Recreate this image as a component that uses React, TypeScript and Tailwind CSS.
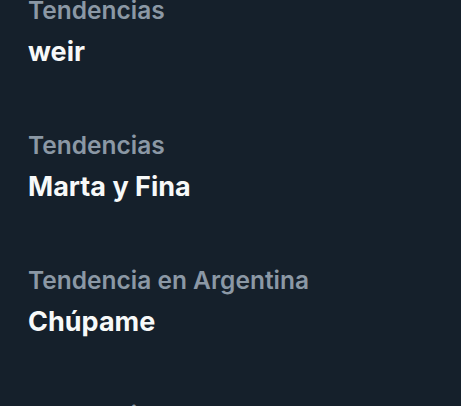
import React from "react";

const items = [
  { label: "Tendencias", title: "weir" },
  { label: "Tendencias", title: "Marta y Fina" },
  { label: "Tendencia en Argentina", title: "Chúpame" },
  { label: "Tendencias", title: "" },
];

export default function App() {
  return (
    <div
      className="w-[461px] h-[406px] overflow-hidden bg-[#15202b]"
      style={{ fontFamily: "Inter, 'Noto Sans', sans-serif" }}
    >
      <div className="flex flex-col -mt-[6px]">
        {items.map((it, i) => (
          <div key={i} className="flex flex-col gap-[8px] h-[135px] px-[28px]">
            <div className="text-[24.5px] leading-[32px] font-semibold text-[#8b98a5]">{it.label}</div>
            <div className="text-[27px] leading-[36px] font-bold text-[#f7f9f9]">{it.title}</div>
          </div>
        ))}
      </div>
    </div>
  );
}
